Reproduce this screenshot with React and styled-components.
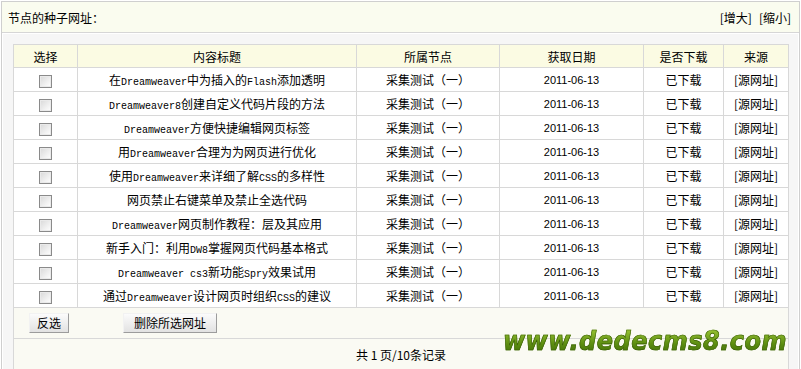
import React from "react";
import styled, { createGlobalStyle } from "styled-components";

const GlobalStyle = createGlobalStyle`
  body {
    margin: 0;
    background: #fff;
    font-family: "Noto Sans CJK SC", "Liberation Sans", sans-serif;
    font-size: 12px;
    color: #000;
  }
`;

export const Wrap = styled.div`
  margin: 1px 0 0 1px;
  width: 797px;
  border: 1px solid #cfcfcf;
  border-bottom: none;
`;

export const TopBar = styled.div`
  height: 30px;
  display: flex;
  align-items: center;
  justify-content: space-between;
  padding: 0 8px 0 6px;
  background: #fafcef;
  border-bottom: 1px solid #d6d6d6;
  font-size: 12px;
`;

export const ZoomLinks = styled.div`
  display: flex;
  gap: 7px;
`;

export const Body = styled.div`
  position: relative;
  background: #f6f6f6;
  border: 1px solid #fff;
  border-bottom: none;
  padding: 10px 10px 0 10px;
  min-height: 340px;
`;

export const Table = styled.table`
  width: 775px;
  border-collapse: collapse;
  table-layout: fixed;
  background: #fff;
`;

export const HeadCell = styled.th`
  height: 22px;
  padding: 0;
  font-weight: normal;
  font-size: 12px;
  background: #fbfbe3;
  border: 1px solid #d8d8d8;
  text-align: center;
`;

export const Cell = styled.td`
  height: 23px;
  padding: 0;
  border: 1px solid #d8d8d8;
  text-align: center;
  white-space: nowrap;
  font-size: ${(p) => (p.$date ? "11px" : "12px")};
  font-family: ${(p) =>
    p.$date ? '"Liberation Sans", "DejaVu Sans", sans-serif' : "inherit"};
`;

export const Latin = styled.span`
  font-family: "Liberation Mono", "DejaVu Sans Mono", monospace;
  font-size: 10px;
`;

export const Check = styled.span`
  display: inline-block;
  width: 11px;
  height: 11px;
  vertical-align: middle;
  border: 1px solid #8a8a8a;
  background: linear-gradient(135deg, #d8d8d8 0%, #f4f4f4 70%, #fff 100%);
  box-shadow: inset 0 0 0 1px #eaeaea;
`;

export const ActionCell = styled.td`
  height: 30px;
  padding: 0 0 0 15px;
  border: 1px solid #d8d8d8;
  background: #fafaf3;
`;

export const FootCell = styled.td`
  height: 30px;
  padding: 0;
  border: 1px solid #d8d8d8;
  background: #fafaf3;
  text-align: center;
  font-size: 12px;
`;

export const Button = styled.button`
  height: 20px;
  padding: 0 ${(p) => p.$pad || 7}px;
  margin-right: ${(p) => p.$gap || 0}px;
  font-family: "Noto Sans CJK SC", sans-serif;
  font-size: 12px;
  line-height: 18px;
  color: #000;
  border: 1px solid;
  border-color: #f2f2f2 #9c9c9c #9c9c9c #f2f2f2;
  background: linear-gradient(#fbfbfb, #e2e2e2);
  vertical-align: middle;
`;

export const Watermark = styled.div`
  position: absolute;
  right: 11px;
  top: 294px;
  font-family: "DejaVu Sans", "Liberation Sans", sans-serif;
  font-weight: bold;
  font-style: italic;
  font-size: 24px;
  letter-spacing: 0.5px;
  line-height: 26px;
  transform: scaleY(1.12);
  background: linear-gradient(#a5d03a, #5c8d10 60%, #3f6b06);
  -webkit-background-clip: text;
  background-clip: text;
  color: transparent;
  -webkit-text-stroke: 0.6px #3b5f06;
  pointer-events: none;
`;

const columns = [
  ["选择", 64],
  ["内容标题", 279],
  ["所属节点", 143],
  ["获取日期", 144],
  ["是否下载", 80],
  ["来源", 65],
];

const titles = [
  "在Dreamweaver中为插入的Flash添加透明",
  "Dreamweaver8创建自定义代码片段的方法",
  "Dreamweaver方便快捷编辑网页标签",
  "用Dreamweaver合理为为网页进行优化",
  "使用Dreamweaver来详细了解CSS的多样性",
  "网页禁止右键菜单及禁止全选代码",
  "Dreamweaver网页制作教程：层及其应用",
  "新手入门：利用DW8掌握网页代码基本格式",
  "Dreamweaver cs3新功能Spry效果试用",
  "通过Dreamweaver设计网页时组织CSS的建议",
];

const Title = ({ text }) => (
  <>
    {text.split(/([A-Za-z0-9 ]+)/).map((part, i) =>
      /^[A-Za-z0-9 ]+$/.test(part) ? (
        <Latin key={i}>{part}</Latin>
      ) : (
        part
      )
    )}
  </>
);

const App = () => {
  return (
    <>
      <GlobalStyle />
      <Wrap>
        <TopBar>
          <span>节点的种子网址：</span>
          <ZoomLinks>
            <span>[增大]</span>
            <span>[缩小]</span>
          </ZoomLinks>
        </TopBar>
        <Body>
          <Table>
            <colgroup>
              {columns.map(([name, w]) => (
                <col key={name} style={{ width: w }} />
              ))}
            </colgroup>
            <thead>
              <tr>
                {columns.map(([name]) => (
                  <HeadCell key={name}>{name}</HeadCell>
                ))}
              </tr>
            </thead>
            <tbody>
              {titles.map((t) => (
                <tr key={t}>
                  <Cell>
                    <Check />
                  </Cell>
                  <Cell>
                    <Title text={t} />
                  </Cell>
                  <Cell>采集测试（一）</Cell>
                  <Cell $date>2011-06-13</Cell>
                  <Cell>已下载</Cell>
                  <Cell>[源网址]</Cell>
                </tr>
              ))}
              <tr>
                <ActionCell colSpan={6}>
                  <Button $gap={54}>反选</Button>
                  <Button $pad={10}>删除所选网址</Button>
                </ActionCell>
              </tr>
              <tr>
                <FootCell colSpan={6}>共 1 页/10条记录</FootCell>
              </tr>
            </tbody>
          </Table>
          <Watermark>www.dedecms8.com</Watermark>
        </Body>
      </Wrap>
    </>
  );
};

export default App;
